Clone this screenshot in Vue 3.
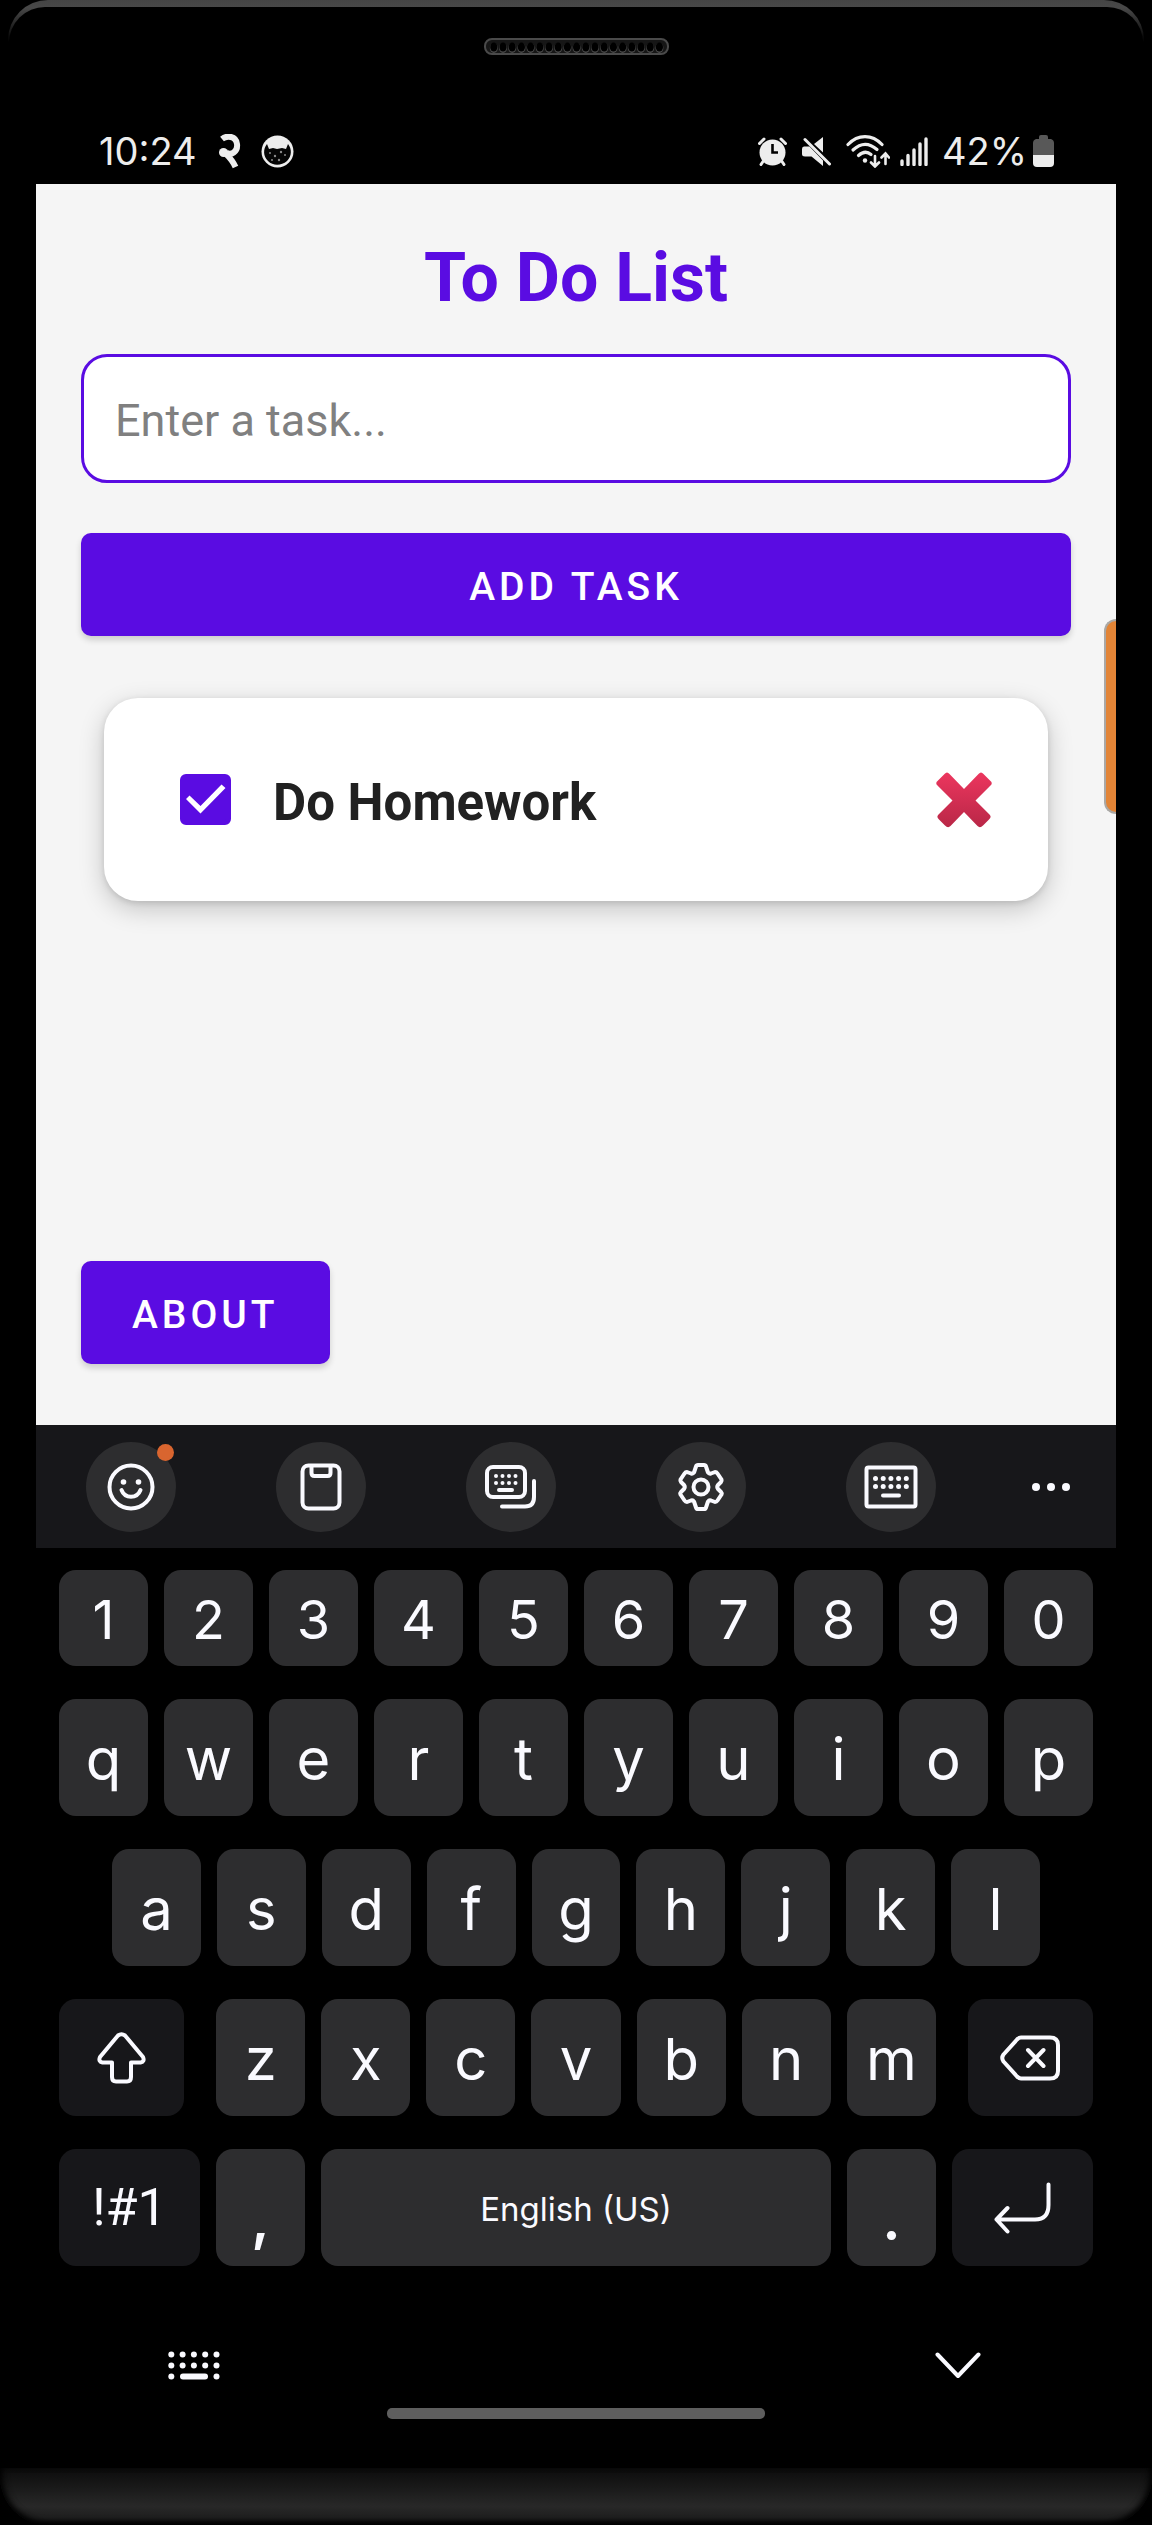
<script setup>
import { ref } from 'vue'

const draft = ref('')
const tasks = ref([{ id: 1, title: 'Do Homework', done: true }])

function addTask() {
  const title = draft.value.trim()
  if (!title) return
  tasks.value.push({ id: Date.now(), title, done: false })
  draft.value = ''
}

function removeTask(id) {
  tasks.value = tasks.value.filter((task) => task.id !== id)
}

const digits = [...'1234567890']
const topRow = [...'qwertyuiop']
const homeRow = [...'asdfghjkl']
const bottomRow = [...'zxcvbnm']
</script>

<template>
  <div class="phone">
    <div class="rim">
      <div class="forehead">
        <svg class="speaker" width="185" height="17" viewBox="0 0 185 17" aria-hidden="true">
          <rect x="1" y="1" width="183" height="15" rx="7" fill="#161616" stroke="#4a4a4a" stroke-width="2" />
          <g v-for="n in 19" :key="n">
            <ellipse :cx="n * 9.2 + 0.6" cy="10" rx="4" ry="5" fill="#4a4a4a" />
            <ellipse :cx="n * 9.2 + 0.6" cy="9" rx="3.6" ry="4.6" fill="#000" />
          </g>
        </svg>
      </div>

      <div class="screen">
        <header class="status">
          <span class="clock">10:24</span>
          <svg class="glyph-two" width="22" height="35" viewBox="0 0 22 35" aria-hidden="true">
            <path d="M3 5C8 1 17 2 18 10C19 18 12 22 7 18.500M5 18C8 21 13 25 16.500 33" fill="none" stroke="#ededed" stroke-width="6" />
            <circle cx="4.500" cy="18.500" r="4.500" fill="#ededed" />
          </svg>
          <svg class="face" width="33" height="33" viewBox="0 0 33 33" aria-hidden="true">
            <circle cx="16.500" cy="16.500" r="16" fill="#ededed" />
            <path d="M6 9L8 14L12 13L16 14L21 13L25 14L27 9C31 14 31 21 26 26C20 31 12 31 7 26C2 21 2 14 6 9Z" fill="#050505" />
            <g fill="#8a8a8a">
              <circle cx="9" cy="18" r="1" /><circle cx="14" cy="21" r="1.200" /><circle cx="20" cy="17" r="1.200" />
              <circle cx="24" cy="20" r="1" /><circle cx="18" cy="25" r="1.200" /><circle cx="11" cy="25" r="1" />
            </g>
          </svg>
          <span class="grow"></span>
          <svg class="alarm" width="29" height="29" viewBox="0 0 29 29" aria-hidden="true">
            <circle cx="14.500" cy="15.500" r="13" fill="#ededed" />
            <path d="M1.500 6.500L6 2M27.500 6.500L23 2M5 24.500L3 27.500M24 24.500L26 27.500" stroke="#ededed" stroke-width="3" stroke-linecap="round" />
            <path d="M14.500 7V15.500H20" fill="none" stroke="#000" stroke-width="2.600" />
          </svg>
          <svg class="mute" width="29" height="29" viewBox="0 0 29 29" aria-hidden="true">
            <path d="M21 0V15.500L12 7Z" fill="#ededed" />
            <path d="M2 9.500H7.500L21 23.500V29L9.500 19.500H3Q0 19.500 0 17V12Q0 9.500 2 9.500Z" fill="#ededed" />
            <path d="M3 2.500L27.500 27" stroke="#ededed" stroke-width="3" stroke-linecap="round" />
          </svg>
          <svg class="wifi" width="44" height="33" viewBox="0 0 44 33" aria-hidden="true">
            <g fill="none" stroke="#ededed" stroke-width="3.200" stroke-linecap="round">
              <path d="M2 9.500C12 -1 26 -1 36 9.500" />
              <path d="M7 15C15 7.500 23 7.500 31 14.500" />
              <path d="M12.500 20.500C17 16.500 21.500 16.500 25 19.500" />
              <path d="M29 21V31M25 27.500L29 31.500L33 27.500" stroke-width="2.600" />
              <path d="M39.500 29V19M35.500 22.500L39.500 18.500L43 22.500" stroke-width="2.600" />
            </g>
            <circle cx="19" cy="25.500" r="2.200" fill="#ededed" />
          </svg>
          <svg class="signal" width="28" height="29" viewBox="0 0 28 29" aria-hidden="true">
            <path d="M2 27.500V24M8 27.500V18.500M14 27.500V13M20 27.500V7M26 27.500V2" stroke="#ededed" stroke-width="3.400" stroke-linecap="round" />
          </svg>
          <span class="percent">42%</span>
          <svg class="battery" width="21" height="32" viewBox="0 0 21 32" aria-hidden="true">
            <path d="M6 2Q6 0 8 0H13Q15 0 15 2V4H18Q21 5 21 8V20H0V8Q0 5 3 4H6Z" fill="#585858" />
            <path d="M0 20H21V28Q21 32 17 32H4Q0 32 0 28Z" fill="#ededed" />
          </svg>
        </header>

        <main class="app">
          <h1>To Do List</h1>
          <form @submit.prevent="addTask">
            <input v-model="draft" class="entry" type="text" placeholder="Enter a task..." aria-label="Enter a task" />
            <button class="btn btn-block" type="submit">ADD TASK</button>
          </form>
          <ul class="tasks">
            <li v-for="task in tasks" :key="task.id" class="card">
              <label class="task">
                <span class="tick">
                  <input v-model="task.done" type="checkbox" />
                  <svg v-if="task.done" width="51" height="51" viewBox="0 0 51 51" aria-hidden="true">
                    <path d="M6 25L9.500 21.500L20.500 32L41.500 10.500L45.500 14L20.500 39.500Z" fill="#fff" />
                  </svg>
                </span>
                <span class="task-title">{{ task.title }}</span>
              </label>
              <button class="remove" type="button" aria-label="Delete task" @click="removeTask(task.id)">
                <svg width="56" height="56" viewBox="0 0 56 56" aria-hidden="true">
                  <defs>
                    <linearGradient id="cross" x1="0" y1="0" x2="0" y2="1">
                      <stop offset="0" stop-color="#ec365e" />
                      <stop offset="1" stop-color="#b92747" />
                    </linearGradient>
                  </defs>
                  <path d="M8.500 2Q11 -1 13.500 2L28 17L42.500 2Q45 -1 47.500 2L54.500 9Q57 11 54.500 13.500L39.500 28.500L53.500 42.500Q56 45 53 47.500L47 53.500Q44 56.500 41.500 54L28 40L14.500 54Q12 56.500 9 53.500L3 47.500Q0 45 2.500 42.500L16.500 28.500L1.500 13.500Q-1 11 1.500 9Z" fill="url(#cross)" />
                </svg>
              </button>
            </li>
          </ul>
          <button class="btn btn-about" type="button">ABOUT</button>
          <div class="edge-handle"></div>
        </main>

        <div class="toolbar">
          <button type="button" aria-label="Emoji">
            <svg width="48" height="48" viewBox="-24 -24 48 48">
              <circle r="21.500" />
              <path d="M-9.500 3C-6 12 6 12 9.500 3" />
              <g class="solid"><circle cx="-7.500" cy="-5" r="2.800" /><circle cx="7.500" cy="-5" r="2.800" /></g>
            </svg>
            <i class="dot"></i>
          </button>
          <button type="button" aria-label="Clipboard">
            <svg width="42" height="48" viewBox="0 0 42 48">
              <rect x="2.500" y="2.500" width="37" height="43" rx="6" />
              <path d="M11.500 3V10Q11.500 13 14.500 13H27.500Q30.500 13 30.500 10V3" />
            </svg>
          </button>
          <button type="button" aria-label="Keyboard size">
            <svg width="52" height="44" viewBox="0 0 52 44">
              <rect x="2" y="2" width="38" height="30" rx="6" />
              <path d="M49 16V32Q49 41.500 40 41.500H17M14 25H27" />
              <g class="solid">
                <template v-for="n in 4" :key="n">
                  <circle :cx="4.500 + n * 6.500" cy="11" r="2" /><circle :cx="4.500 + n * 6.500" cy="18" r="2" />
                </template>
              </g>
            </svg>
          </button>
          <button type="button" aria-label="Settings">
            <svg width="48" height="48" viewBox="-24 -24 48 48">
              <path d="M-5 -20.500Q-4.500 -22 -3 -22H3Q4.500 -22 5 -20.500L7 -14.500Q8 -13 10 -13.500L14 -15Q15.500 -15 16.500 -13.500L20.500 -7.500Q21 -6 20 -5L17 -2Q15.500 0 17 2L20 5Q21 6 20.500 7.500L16.500 13.500Q15.500 15 14 15L10 13.500Q8 13 7 14.500L5 20.500Q4.500 22 3 22H-3Q-4.500 22 -5 20.500L-7 14.500Q-8 13 -10 13.500L-14 15Q-15.500 15 -16.500 13.500L-20.500 7.500Q-21 6 -20 5L-17 2Q-15.500 0 -17 -2L-20 -5Q-21 -6 -20.500 -7.500L-16.500 -13.500Q-15.500 -15 -14 -15L-10 -13.500Q-8 -13 -7 -14.500Z" />
              <circle r="7.500" />
            </svg>
          </button>
          <button type="button" aria-label="Keyboard modes">
            <svg width="54" height="44" viewBox="0 0 54 44">
              <rect x="2.500" y="2.500" width="49" height="39" rx="2" />
              <path d="M19 30.500H35" />
              <g class="solid">
                <template v-for="n in 5" :key="n">
                  <circle :cx="3.800 + n * 7.700" cy="13.500" r="2.500" /><circle :cx="3.800 + n * 7.700" cy="21.500" r="2.500" />
                </template>
              </g>
            </svg>
          </button>
          <button class="more" type="button" aria-label="More">
            <svg width="40" height="10" viewBox="0 0 40 10">
              <g class="solid"><circle cx="5" cy="5" r="4" /><circle cx="20" cy="5" r="4" /><circle cx="35" cy="5" r="4" /></g>
            </svg>
          </button>
        </div>

        <div class="keys">
          <div class="row row-digits">
            <button v-for="k in digits" :key="k" class="key digit" type="button">{{ k }}</button>
          </div>
          <div class="row">
            <button v-for="k in topRow" :key="k" class="key" type="button">{{ k }}</button>
          </div>
          <div class="row row-home">
            <button v-for="k in homeRow" :key="k" class="key" type="button">{{ k }}</button>
          </div>
          <div class="row">
            <button class="key dark shift" type="button" aria-label="Shift">
              <svg width="49" height="52" viewBox="0 0 49 52">
                <path d="M21 3.500Q24.500 1 28 3.500L46 25Q48 29.500 43.500 30.500H34V45Q34 49.500 30 49.500H19Q15 49.500 15 45V30.500H5.500Q1 29.500 3 25Z" />
              </svg>
            </button>
            <button v-for="k in bottomRow" :key="k" class="key" type="button">{{ k }}</button>
            <button class="key dark erase" type="button" aria-label="Backspace">
              <svg width="60" height="46" viewBox="0 0 60 46">
                <path d="M21 2.500H50Q58 2.500 58 10V36Q58 43.500 50 43.500H21Q19 43.500 17 41.500L3.500 26.500Q1 23 3.500 19.500L17 4.500Q19 2.500 21 2.500ZM28 15L43.500 31M43.500 15L28 31" />
              </svg>
            </button>
          </div>
          <div class="row">
            <button class="key dark mode" type="button">!#1</button>
            <button class="key mark" type="button">,</button>
            <button class="key space" type="button">English (US)</button>
            <button class="key mark" type="button">.</button>
            <button class="key dark mode" type="button" aria-label="Enter">
              <svg width="57" height="52" viewBox="0 0 57 52">
                <path d="M54.500 2.500V23Q54.500 37.500 41 37.500H3M13.500 26L2.500 37.500L13.500 49.500" />
              </svg>
            </button>
          </div>
        </div>

        <div class="nav">
          <button type="button" aria-label="Switch keyboard">
            <svg width="52" height="29" viewBox="0 0 52 29">
              <g class="solid">
                <template v-for="n in 5" :key="n">
                  <circle :cx="n * 11.300 - 8" cy="3.500" r="3" /><circle :cx="n * 11.300 - 8" cy="14.500" r="3" />
                </template>
                <circle cx="3.300" cy="25.500" r="3" /><circle cx="48.500" cy="25.500" r="3" />
                <rect x="12" y="22.500" width="28" height="6" rx="3" />
              </g>
            </svg>
          </button>
          <button type="button" aria-label="Hide keyboard">
            <svg width="46" height="27" viewBox="0 0 46 27">
              <path d="M2.500 2.500L23 24L43.500 2.500" />
            </svg>
          </button>
        </div>
        <div class="home-bar"></div>
      </div>
    </div>
    <div class="chin"></div>
  </div>
</template>

<style>
body {
  margin: 0;
  background: #000;
}
</style>

<style scoped>
* {
  box-sizing: border-box;
}
button {
  border: 0;
  padding: 0;
  margin: 0;
  background: none;
  color: inherit;
  font: inherit;
}
svg {
  display: block;
  flex: none;
}
.phone {
  background: #000;
  padding: 0 8px;
  font-family: Roboto, sans-serif;
}
.rim {
  padding: 7px 0 0;
  border-radius: 40px 40px 0 0;
  background: linear-gradient(#444 0, #484848 8px, #000 42px);
}
.forehead {
  height: 111px;
  padding-top: 31px;
  margin: 0 1px;
  border-radius: 36px 36px 0 0;
  background: #000;
}
.speaker {
  margin: 0 auto;
}
.screen {
  padding: 0 28px;
  background: #000;
}
.status {
  display: flex;
  align-items: center;
  height: 66px;
  padding: 0 62px 0 63px;
  color: #ededed;
  font: 400 38px/48px Inter, sans-serif;
}
.glyph-two {
  margin: 0 20px 0 22px;
}
.grow {
  flex: 1;
}
.mute,
.wifi {
  margin-left: 15px;
}
.signal {
  margin: 0 14px 0 10px;
}
.battery {
  margin-left: 6px;
}
.app {
  position: relative;
  padding: 54px 45px 61px;
  background: #f5f5f5;
}
h1 {
  margin: 0 0 36px;
  color: #5a0ce2;
  font-size: 68px;
  line-height: 80px;
  font-weight: 700;
  text-align: center;
}
.entry {
  display: block;
  width: 100%;
  height: 129px;
  margin: 0 0 50px;
  padding: 4px 31px 0;
  border: 3px solid #5a0ce2;
  border-radius: 26px;
  background: #fff;
  color: #212121;
  font: 400 45px/54px Roboto, sans-serif;
  outline: 0;
}
.entry::placeholder {
  color: #808080;
  opacity: 1;
}
.btn {
  display: block;
  height: 103px;
  padding: 4px 51px 0;
  border-radius: 10px;
  background: #5a0ce2;
  color: #fff;
  font-size: 39px;
  font-weight: 500;
  line-height: 48px;
  letter-spacing: 4px;
  box-shadow: 0 4px 6px rgba(0, 0, 0, 0.16);
}
.btn-block {
  width: 100%;
}
.tasks {
  min-height: 625px;
  margin: 0;
  padding: 62px 23px 0;
  list-style: none;
}
.card {
  display: flex;
  align-items: center;
  justify-content: space-between;
  height: 203px;
  margin-bottom: 46px;
  padding: 0 56px 0 76px;
  border-radius: 34px;
  background: #fff;
  box-shadow: 0 8px 26px rgba(0, 0, 0, 0.2), 0 2px 6px rgba(0, 0, 0, 0.12);
}
.task {
  display: flex;
  align-items: center;
  gap: 42px;
}
.tick {
  display: grid;
}
.tick > * {
  grid-area: 1 / 1;
}
.tick input {
  width: 51px;
  height: 51px;
  margin: 0;
  border: 5px solid #666;
  border-radius: 6px;
  appearance: none;
}
.tick input:checked {
  border-color: #5a0ce2;
  background: #5a0ce2;
}
.tick svg {
  pointer-events: none;
}
.task-title {
  padding-top: 6px;
  color: #212121;
  font-size: 51px;
  font-weight: 700;
  line-height: 60px;
}
.edge-handle {
  position: absolute;
  top: 435px;
  right: 0;
  width: 12px;
  height: 195px;
  border: 2px solid #aaa8a5;
  border-right: 0;
  border-radius: 12px 0 0 12px;
  background: #e28436;
}
.toolbar {
  display: grid;
  grid-template-columns: repeat(5, 19fr) 13fr;
  align-items: center;
  justify-items: center;
  height: 123px;
  background: #17171a;
}
.toolbar button {
  position: relative;
  display: grid;
  place-items: center;
  width: 90px;
  height: 90px;
  border-radius: 50%;
  background: #2d2d2f;
}
.toolbar .more {
  background: none;
}
.dot {
  position: absolute;
  top: 2px;
  right: 2px;
  width: 17px;
  height: 17px;
  border-radius: 50%;
  background: #d9652f;
}
.toolbar svg,
.keys svg,
.nav svg {
  fill: none;
  stroke: #fafaff;
  stroke-width: 4;
  stroke-linecap: round;
  stroke-linejoin: round;
}
.toolbar .solid,
.nav .solid {
  fill: #fafaff;
  stroke: none;
}
.keys {
  display: flex;
  flex-direction: column;
  gap: 33px;
  padding: 22px 23px 0;
}
.row {
  display: flex;
  gap: 16px;
  height: 117px;
}
.row-digits {
  height: 96px;
}
.row-home {
  padding: 0 53px;
}
.key {
  display: flex;
  flex: 89 1 0;
  align-items: center;
  justify-content: center;
  min-width: 0;
  padding-top: 2px;
  border-radius: 17px;
  background: #2d2d2f;
  color: #fafaff;
  font: 400 58px/68px Inter, sans-serif;
}
.digit {
  padding-top: 4px;
  font-size: 54px;
}
.dark {
  padding: 0;
  background: #17171a;
}
.shift,
.erase {
  flex-grow: 125;
}
.shift {
  margin-right: 16px;
}
.erase {
  margin-left: 16px;
}
.mode {
  flex-grow: 141;
  font-family: Roboto, sans-serif;
  font-size: 52px;
}
.mark {
  padding-top: 20px;
  font-weight: 600;
}
.space {
  flex-grow: 510;
  font-size: 33px;
}
.nav {
  display: flex;
  align-items: center;
  justify-content: space-between;
  padding: 85px 135px 28px 132px;
}
.home-bar {
  width: 35%;
  height: 11px;
  margin: 0 auto 49px;
  border-radius: 5px;
  background: #5e5e5e;
}
.chin {
  height: 58px;
  margin: 0 -8px;
  border-radius: 0 0 50px 50px;
  background: linear-gradient(#0c0c0c, #1c1c1c 40%, #282828 66%, #1e1e1e 86%, #000);
  box-shadow: inset 0 -3px 6px #000, inset 6px 0 10px -6px #000, inset -6px 0 10px -6px #000;
}
</style>
